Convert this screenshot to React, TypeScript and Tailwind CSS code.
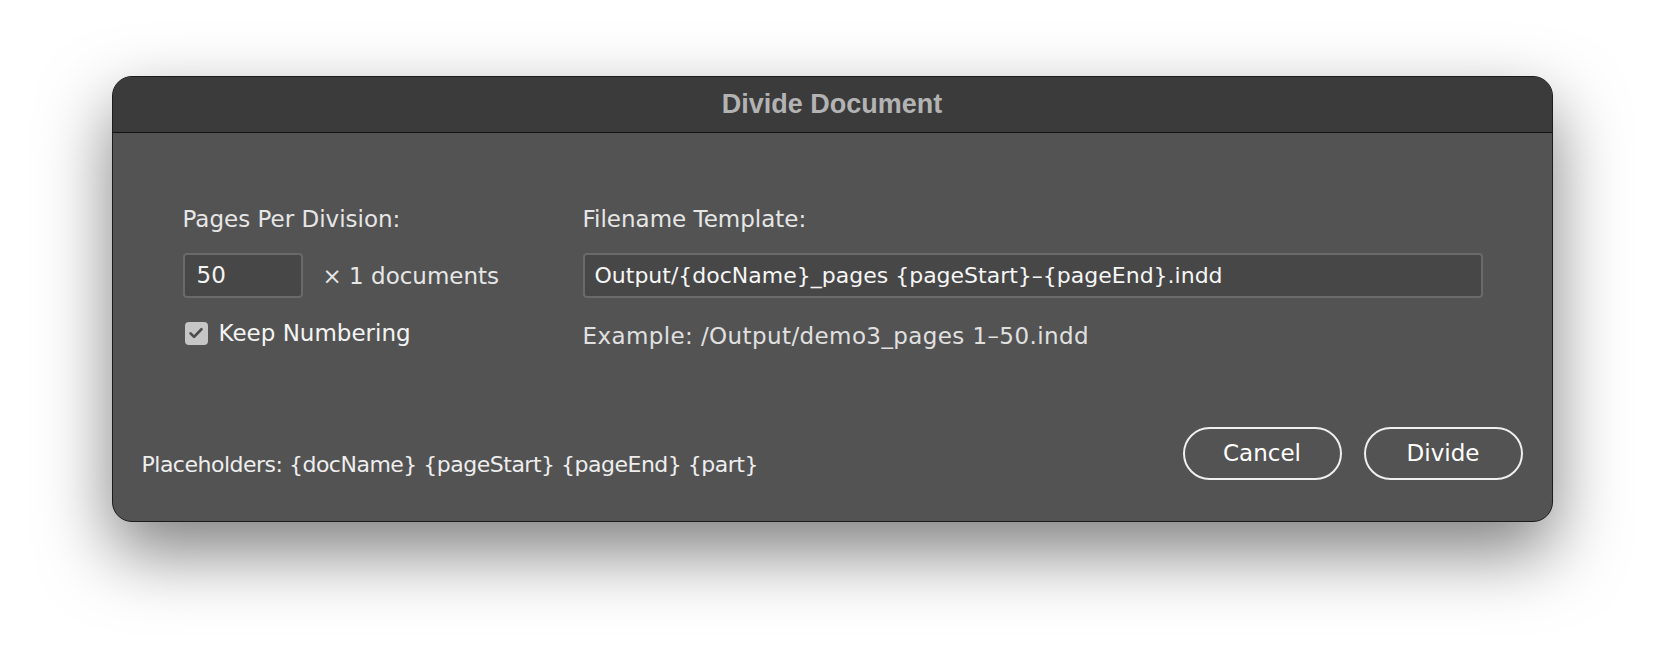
import React from "react";

const body = { fontFamily: '"DejaVu Sans", "Open Sans", sans-serif' };

export default function App() {
  return (
    <div className="w-full h-[670px] bg-white flex justify-center pt-[76px] overflow-hidden">
      <div
        className="w-[1441px] h-[446px] rounded-[20px] border border-[#1c1c1c] bg-[#535353] flex flex-col overflow-hidden shadow-[0_30px_70px_rgba(0,0,0,0.5)]"
        style={body}
      >
        {/* Title bar */}
        <div className="h-[56px] shrink-0 bg-[#3b3b3b] border-b border-[#121212] flex items-center justify-center">
          <span
            className="text-[27px] font-bold text-[#b3b3b3] leading-none"
            style={{ fontFamily: '"Liberation Sans", Arial, sans-serif' }}
          >
            Divide Document
          </span>
        </div>

        {/* Body */}
        <div className="flex-1 flex flex-col">
          <div className="flex pt-[73px] pl-[70px]">
            {/* Left column */}
            <div className="w-[400px] flex flex-col">
              <div className="text-[23px] leading-[26px] text-[#e6e6e6]">Pages Per Division:</div>
              <div className="mt-[21px] flex items-center">
                <div className="w-[120px] h-[45px] rounded-[4px] border-2 border-[#6a6a6a] bg-[#474747] flex items-center pl-[12px] text-[23px] text-[#f4f4f4]">
                  50
                </div>
                <span className="ml-[20px] text-[23px] leading-[26px] text-[#e6e6e6]">× 1 documents</span>
              </div>
              <div className="mt-[22px] flex items-center h-[26px]">
                <div className="w-[23px] h-[23px] ml-[2px] rounded-[4px] bg-[#c6c6c6] flex items-center justify-center">
                  <svg width="20" height="20" viewBox="0 0 24 24" fill="none">
                    <path d="M5.5 12.5l4.2 4.2L18.5 7.5" stroke="#4d4d4d" strokeWidth="3.2" strokeLinecap="round" strokeLinejoin="round" />
                  </svg>
                </div>
                <span className="ml-[11px] text-[23px] leading-[26px] text-[#f4f4f4]">Keep Numbering</span>
              </div>
            </div>

            {/* Right column */}
            <div className="w-[900px] flex flex-col">
              <div className="text-[23px] leading-[26px] text-[#e6e6e6]">Filename Template:</div>
              <div className="mt-[21px] h-[45px] rounded-[4px] border-2 border-[#6a6a6a] bg-[#474747] flex items-center pl-[10px] text-[22px] text-[#f6f6f6] whitespace-nowrap">
                Output/{"{docName}"}_pages {"{pageStart}"}–{"{pageEnd}"}.indd
              </div>
              <div className="mt-[25px] text-[23px] leading-[26px] tracking-[0.4px] text-[#e0e0e0] whitespace-nowrap">
                Example: /Output/demo3_pages 1–50.indd
              </div>
            </div>
          </div>

          <div className="flex-1" />

          {/* Bottom row */}
          <div className="flex items-end justify-between px-[29px] pb-[41px]">
            <div className="mb-[2px] text-[22px] leading-[26px] tracking-[-0.5px] text-[#eeeeee] whitespace-nowrap">
              Placeholders: {"{docName}"} {"{pageStart}"} {"{pageEnd}"} {"{part}"}
            </div>
            <div className="flex gap-[22px]">
              <button className="w-[159px] h-[53px] rounded-full border-2 border-[#efefef] text-[23px] text-white flex items-center justify-center">
                Cancel
              </button>
              <button className="w-[159px] h-[53px] rounded-full border-2 border-[#efefef] text-[23px] text-white flex items-center justify-center">
                Divide
              </button>
            </div>
          </div>
        </div>
      </div>
    </div>
  );
}
